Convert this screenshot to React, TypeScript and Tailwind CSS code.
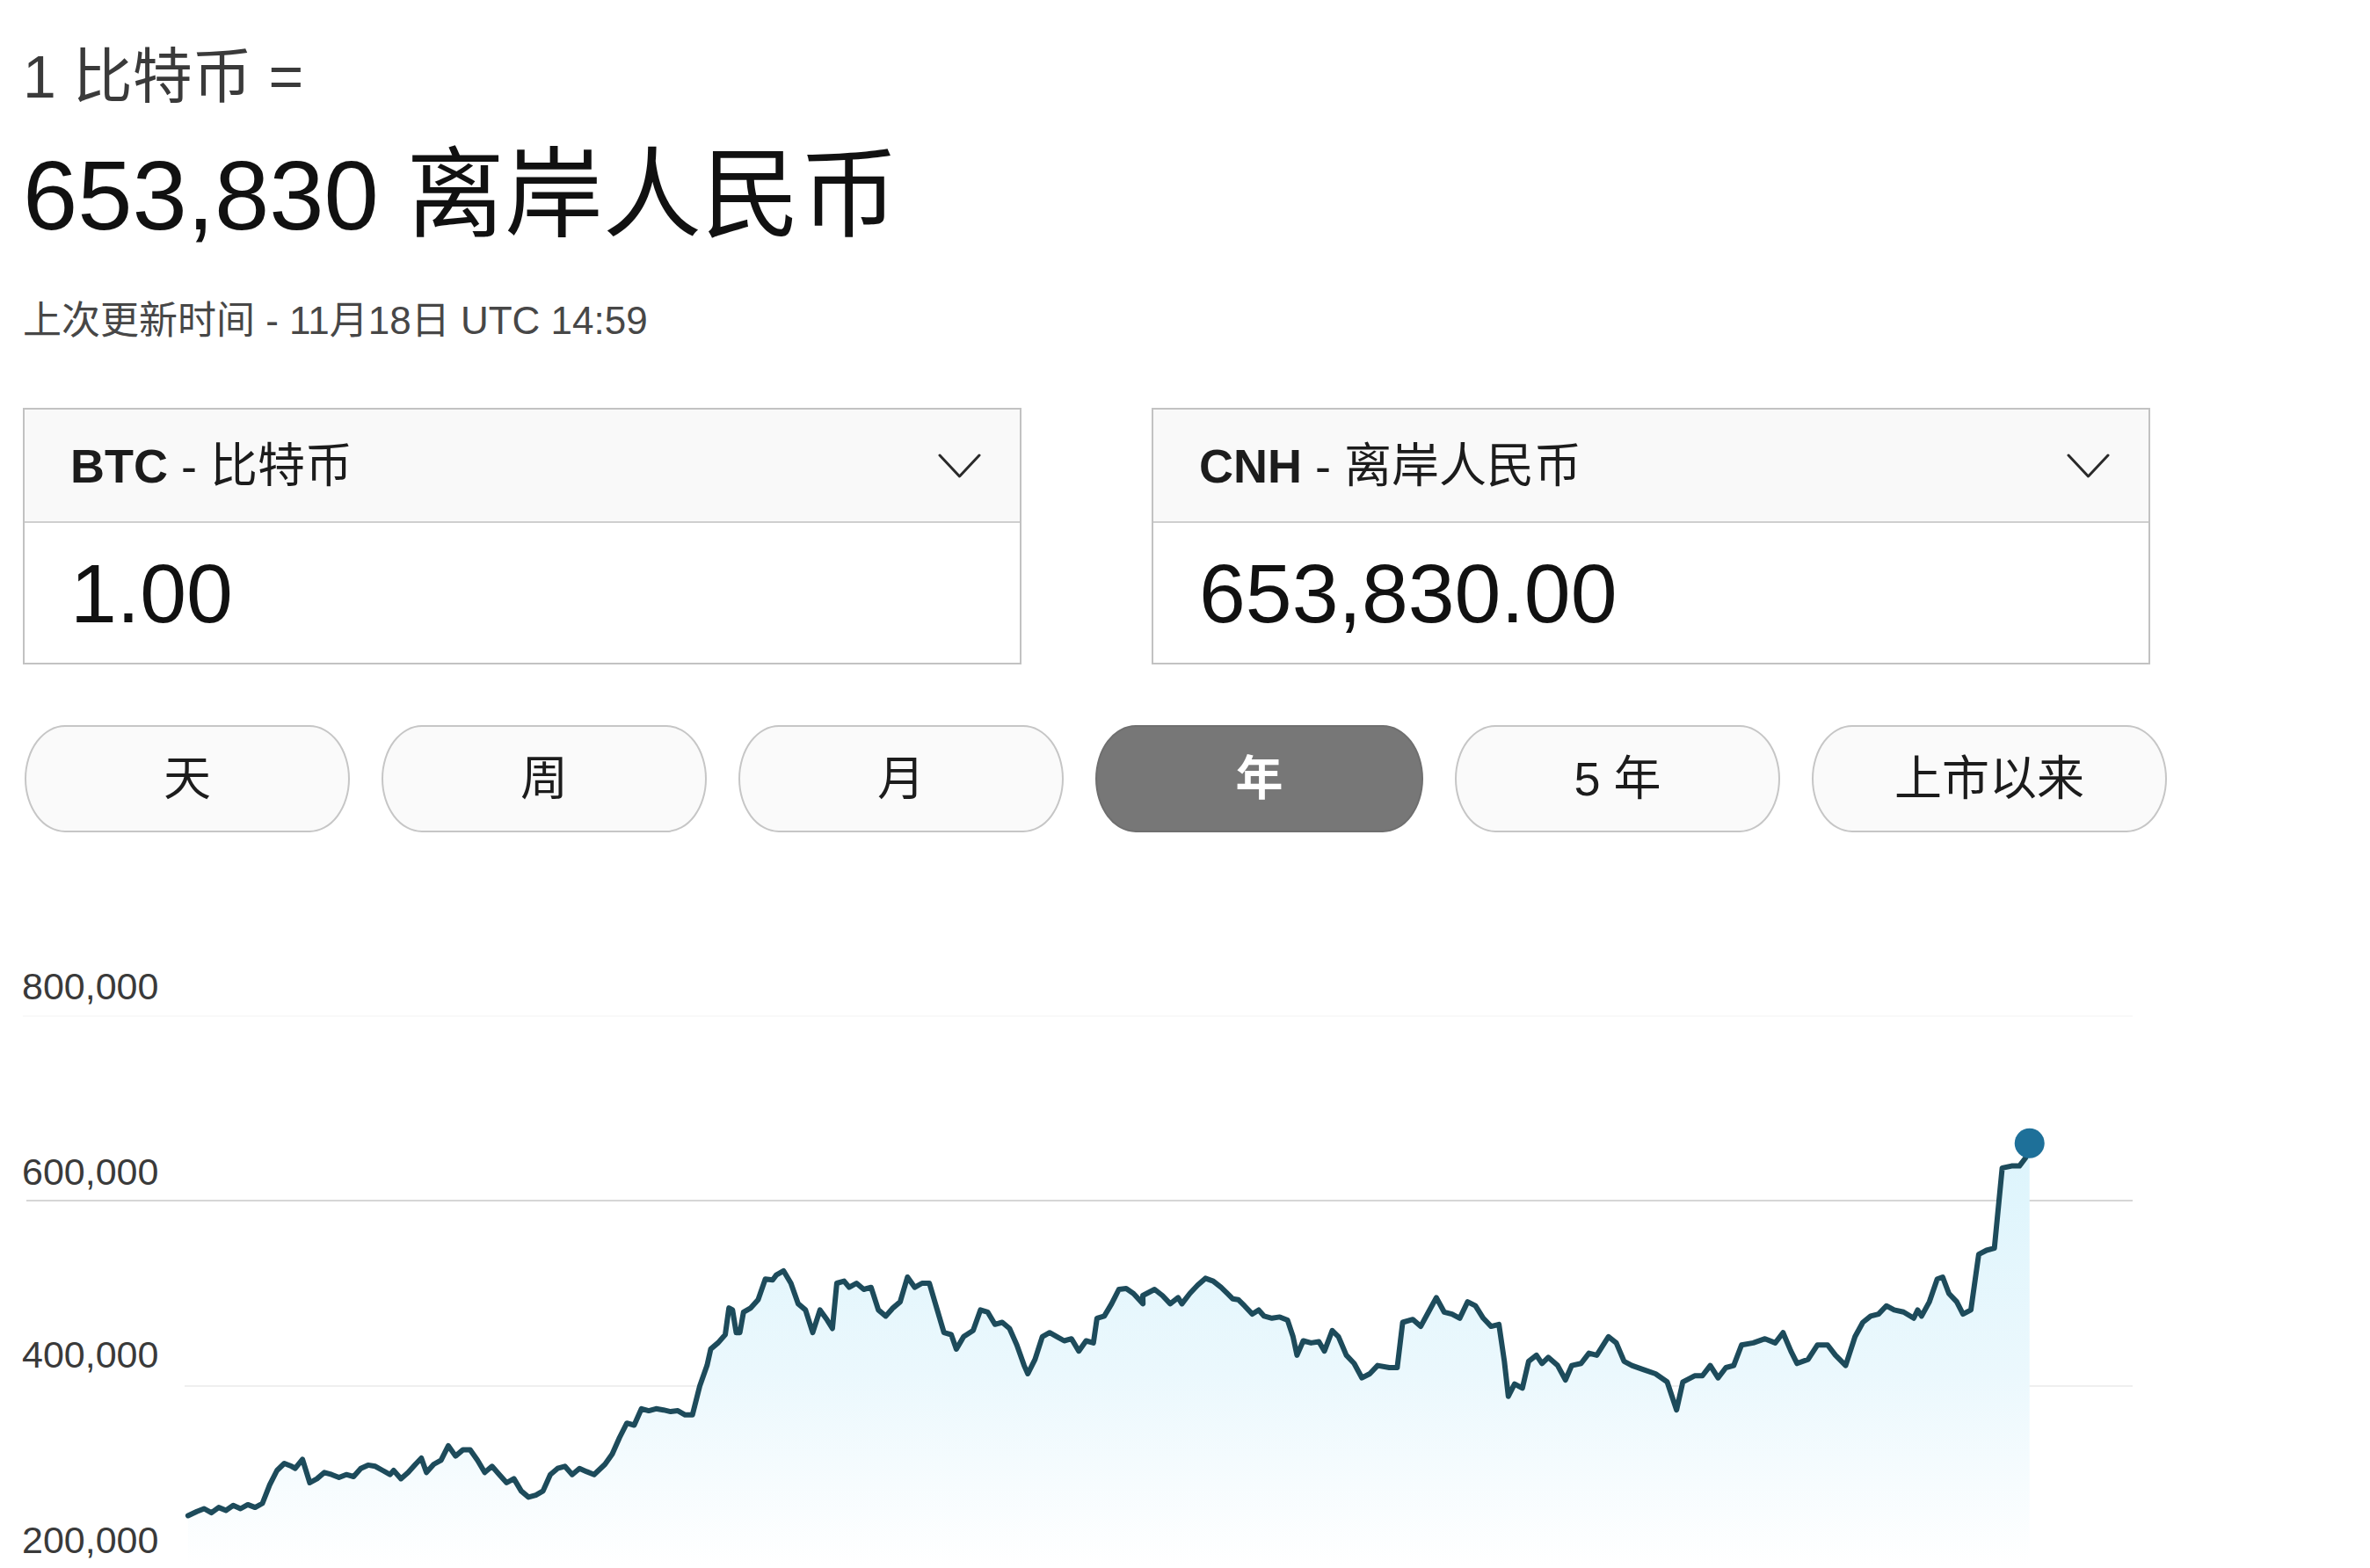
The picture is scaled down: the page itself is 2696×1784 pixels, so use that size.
import React from 'react';

const FONT = "font-['Liberation_Sans','Noto_Sans_CJK_SC',sans-serif]";

// traced from the reference, in two crops
const left: [number, number][] = [
  [258, 1445], [270, 1435], [280, 1428], [290, 1438], [300, 1425], [310, 1432], [320, 1420], [330, 1428], [340, 1418], [350, 1425], [360, 1415],
  [370, 1370], [380, 1335], [390, 1318], [400, 1325], [405, 1330], [415, 1308], [425, 1365], [435, 1355], [445, 1340], [455, 1345], [465, 1352],
  [475, 1345], [485, 1350], [495, 1330], [505, 1322], [515, 1325], [525, 1335], [535, 1345], [540, 1335], [550, 1355], [560, 1340], [570, 1320],
  [578, 1305], [585, 1340], [595, 1320], [605, 1310], [615, 1275], [625, 1300], [635, 1285], [645, 1285], [655, 1310], [665, 1340], [675, 1325],
  [685, 1345], [695, 1365], [705, 1355], [715, 1385], [725, 1400], [735, 1395], [745, 1385], [755, 1345], [765, 1330], [775, 1325], [785, 1345],
  [795, 1330], [805, 1338], [815, 1345], [830, 1320], [840, 1295], [850, 1255], [860, 1220], [870, 1225], [880, 1185], [890, 1190], [900, 1185],
  [910, 1188], [920, 1192], [930, 1190], [940, 1200], [950, 1200], [960, 1130], [970, 1080], [975, 1040], [985, 1025], [995, 1005], [1000, 940],
  [1005, 945], [1010, 1000], [1015, 1000], [1020, 950], [1030, 940], [1040, 920], [1050, 870], [1060, 872], [1065, 860], [1075, 850], [1085, 880],
  [1095, 930], [1105, 945], [1115, 1000], [1125, 945], [1135, 970], [1142, 990], [1148, 880], [1158, 875], [1165, 890], [1175, 880], [1185, 895],
  [1195, 890], [1205, 945], [1215, 960], [1225, 940], [1235, 925], [1245, 865], [1255, 890], [1265, 880], [1275, 880], [1285, 940], [1295, 1000],
  [1305, 1005], [1312, 1040], [1322, 1010], [1335, 995], [1345, 945], [1355, 950], [1365, 980], [1375, 975], [1385, 990], [1395, 1030], [1405, 1080],
  [1410, 1100], [1420, 1065], [1430, 1010], [1440, 1000], [1450, 1010], [1460, 1020], [1470, 1015], [1480, 1045], [1490, 1020], [1500, 1025],
  [1505, 965], [1515, 960], [1525, 930], [1535, 895], [1545, 893], [1555, 905], [1568, 930],
];

const right: [number, number][] = [
  [0, 910], [15, 895], [25, 910], [35, 930], [45, 915], [50, 930], [60, 905], [70, 885], [80, 868], [90, 875], [100, 890], [108, 905], [115, 918],
  [122, 920], [130, 935], [140, 955], [148, 945], [155, 960], [165, 965], [175, 962], [185, 970], [192, 1010], [197, 1055], [205, 1020], [215, 1025],
  [225, 1022], [232, 1045], [242, 995], [250, 1010], [260, 1055], [270, 1075], [280, 1110], [290, 1100], [300, 1080], [315, 1085], [325, 1085],
  [332, 975], [345, 968], [355, 985], [365, 950], [375, 915], [385, 950], [395, 955], [405, 965], [415, 925], [425, 935], [435, 965], [445, 985],
  [455, 980], [462, 1070], [467, 1155], [475, 1125], [485, 1135], [493, 1070], [503, 1055], [510, 1075], [518, 1060], [530, 1080], [540, 1115],
  [548, 1080], [560, 1075], [570, 1050], [580, 1055], [595, 1010], [605, 1025], [615, 1070], [625, 1080], [640, 1090], [655, 1100], [670, 1120],
  [682, 1188], [690, 1120], [705, 1105], [715, 1105], [725, 1080], [735, 1110], [745, 1085], [755, 1080], [765, 1030], [780, 1025], [795, 1015],
  [808, 1025], [818, 1000], [828, 1045], [836, 1075], [850, 1065], [862, 1030], [875, 1030], [885, 1055], [898, 1080], [910, 1010], [920, 975],
  [930, 960], [940, 955], [950, 935], [960, 945], [972, 950], [985, 965], [990, 945], [995, 960], [1005, 925], [1015, 870], [1022, 865], [1030, 905],
  [1040, 925], [1048, 955], [1058, 945], [1068, 810], [1078, 800], [1088, 795], [1098, 600], [1110, 595], [1120, 595], [1128, 575], [1133, 540],
];

const TOP = 949;
const points = [
  ...left.map(([x, y]) => [x / 1.206, 1050 + y / 2.136 - TOP]),
  ...right.map(([x, y]) => [1300 + x / 1.1232, 1050 + y / 2.136 - TOP]),
];
const linePath = points.map(([x, y], i) => `${i ? 'L' : 'M'}${x.toFixed(1)} ${y.toFixed(1)}`).join(' ');
const first = points[0];
const last = points[points.length - 1];
const areaPath = `${linePath} L${last[0].toFixed(1)} 835 L${first[0].toFixed(1)} 835 Z`;

const ranges = ['天', '周', '月', '年', '5 年', '上市以来'];

function Chevron() {
  return (
    <svg width="49" height="28" viewBox="0 0 49 28" fill="none">
      <polyline points="2,2 24.5,26 47,2" stroke="#2a2a2a" strokeWidth="3" strokeLinecap="round" strokeLinejoin="round" />
    </svg>
  );
}

function CurrencyBox({ code, name, value }: { code: string; name: string; value: string }) {
  return (
    <div className="flex h-[292px] w-[1136px] flex-col border-2 border-[#c2c2c2] bg-white">
      <div className="flex h-[129px] items-center justify-between border-b-2 border-[#cfcfcf] bg-[#f9f9f9] pl-[52px] pr-[44px]">
        <span className="text-[54px] leading-none text-[#1c1c1c]">
          <span className="font-bold">{code}</span> - {name}
        </span>
        <Chevron />
      </div>
      <div className="flex flex-1 items-center pl-[52px] pt-[2px]">
        <span className="text-[95px] leading-none text-[#111]">{value}</span>
      </div>
    </div>
  );
}

export default function App() {
  return (
    <div className={`h-[1784px] w-[2696px] overflow-hidden bg-white ${FONT}`}>
      <div className="pl-[26px]">
        <div className="mt-[53px] h-[68px] text-[68px] leading-[68px] text-[#3a3a3a]">1 比特币 =</div>
        <div className="mt-[46px] h-[112px] text-[112px] leading-[112px] text-[#111]">653,830 离岸人民币</div>
        <div className="mt-[64px] h-[44px] text-[44px] leading-[44px] text-[#474747]">上次更新时间 - 11月18日 UTC 14:59</div>

        <div className="mt-[77px] flex gap-[148px]">
          <CurrencyBox code="BTC" name="比特币" value="1.00" />
          <CurrencyBox code="CNH" name="离岸人民币" value="653,830.00" />
        </div>

        <div className="mt-[69px] flex gap-[36px] pl-[2px]">
          {ranges.map((r) =>
            r === '年' ? (
              <div
                key={r}
                className="flex h-[122px] w-[373px] items-center justify-center rounded-[46px/61px] border-2 border-[#6f6f6f] bg-[#777777] text-[54px] font-bold text-white"
              >
                {r}
              </div>
            ) : (
              <div
                key={r}
                className={`flex h-[122px] items-center justify-center rounded-[46px/61px] border-2 border-[#c6c6c6] bg-[#fafafa] text-[54px] text-[#1c1c1c] ${r === '上市以来' ? 'w-[404px]' : 'w-[370px]'}`}
              >
                {r}
              </div>
            )
          )}
        </div>
      </div>

      <svg width="2696" height="835" viewBox="0 0 2696 835" className="block">
        <defs>
          <linearGradient id="fill" gradientUnits="userSpaceOnUse" x1="0" y1="350" x2="0" y2="835">
            <stop offset="0" stopColor="#dcf4fc" />
            <stop offset="0.55" stopColor="#ebf8fd" />
            <stop offset="1" stopColor="#ffffff" />
          </linearGradient>
        </defs>
        <line x1="26" y1="209" x2="2426" y2="209" stroke="#f9f9f9" strokeWidth="2" />
        <line x1="30" y1="419" x2="2426" y2="419" stroke="#d6d6d6" strokeWidth="2" />
        <line x1="210" y1="630" x2="2426" y2="630" stroke="#efefef" strokeWidth="2" />
        <path d={areaPath} fill="url(#fill)" />
        <path d={linePath} fill="none" stroke="#1d4b5b" strokeWidth="6" strokeLinejoin="round" strokeLinecap="round" />
        <circle cx={last[0]} cy={last[1]} r="17" fill="#1e7099" />
        <g className="fill-[#3a3a3a] text-[43px]">
          <text x="25" y="190">800,000</text>
          <text x="25" y="401">600,000</text>
          <text x="25" y="609">400,000</text>
          <text x="25" y="820">200,000</text>
        </g>
      </svg>
    </div>
  );
}
